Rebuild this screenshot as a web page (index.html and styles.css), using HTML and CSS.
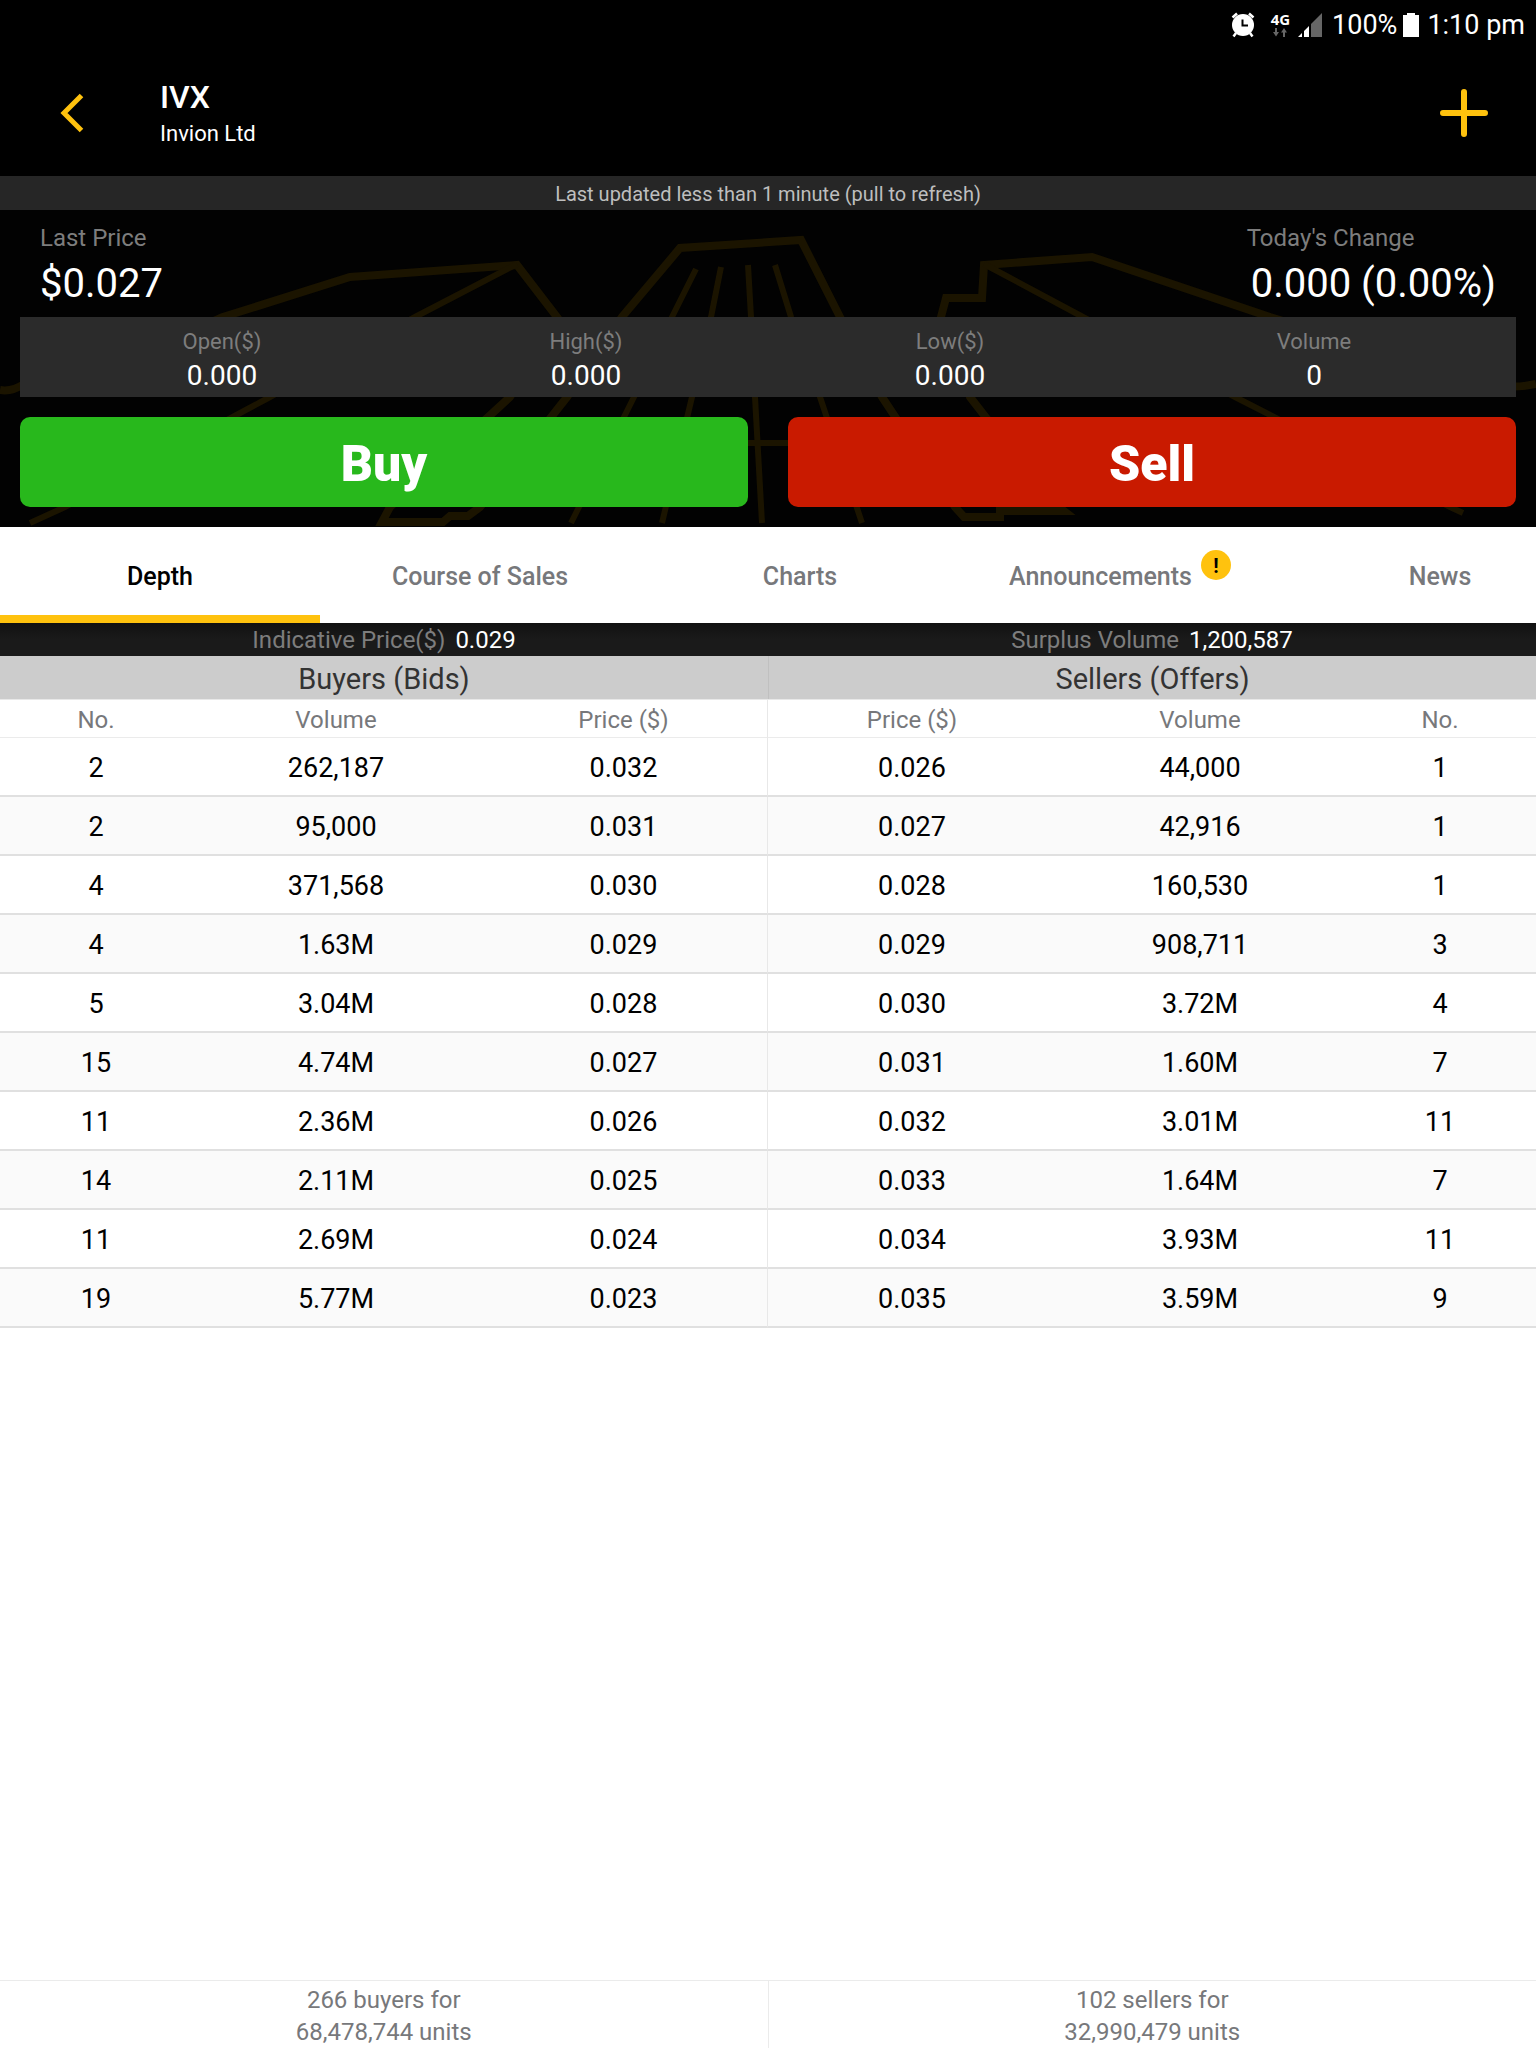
FILE: index.html
```html
<!DOCTYPE html>
<html lang="en">
<head>
    <meta charset="UTF-8">
    <meta name="viewport" content="width=device-width, initial-scale=1.0">
    <title>IVX - Invion Ltd</title>
    <link rel="stylesheet" href="styles.css">
</head>
<body>
    <!-- Device status bar -->
    <div class="status-bar">
        <svg class="icon-alarm" width="24" height="26" viewBox="0 0 24 26">
            <circle cx="12" cy="13" r="11" fill="#fff"/>
            <path d="M1.500 5.500 L6 1.500 M22.500 5.500 L18 1.500" stroke="#fff" stroke-width="2.500"/>
            <path d="M5 21 L2.500 24.500 M19 21 L21.500 24.500" stroke="#fff" stroke-width="2.500"/>
            <path d="M11.500 7.500 V13.500 H17" fill="none" stroke="#000" stroke-width="2"/>
        </svg>
        <div class="network">
            <span>4G</span>
            <svg width="14" height="9" viewBox="0 0 14 9">
                <path d="M2 0 H4 V4 H6 L3 8.500 L0 4 H2 Z M10 9 H12 V4.500 H14 L11 0 L8 4.500 H10 Z" fill="#666"/>
            </svg>
        </div>
        <svg class="icon-signal" width="24" height="24" viewBox="0 0 24 24">
            <path d="M0 24 L4 20 V24 Z M6 24 V18 L11 13 V24 Z" fill="#fff"/>
            <path d="M13 24 V11 L24 0 V24 Z" fill="#666"/>
        </svg>
        <span>100%</span>
        <svg class="icon-battery" width="16" height="24" viewBox="0 0 16 24">
            <path d="M4 0 H12 V2 H16 V24 H0 V2 H4 Z" fill="#fff"/>
        </svg>
        <span>1:10 pm</span>
    </div>

    <header class="header">
        <button class="icon-button back-button" aria-label="Back">
            <svg width="24" height="40" viewBox="0 0 24 40">
                <path d="M21.500 2.500 L4 20 L21.500 37.500" fill="none" stroke="#ffc20e" stroke-width="5"/>
            </svg>
        </button>
        <div class="title">
            <h1>IVX</h1>
            <p>Invion Ltd</p>
        </div>
        <button class="icon-button" aria-label="Add to watchlist">
            <svg width="48" height="48" viewBox="0 0 48 48">
                <path d="M24 3 V45 M3 24 H45" stroke="#ffc20e" stroke-width="6" stroke-linecap="round"/>
            </svg>
        </button>
    </header>

    <div class="updated">Last updated less than 1 minute (pull to refresh)</div>

    <section class="summary">
        <svg class="watermark" viewBox="0 210 1536 317" preserveAspectRatio="none">
            <g fill="none" stroke="#1b1400" stroke-width="8">
                <path d="M0 390 Q12 392 24 384 Q120 365 223 317 L350 277 L517 265 L557 317 L510 397 L390 507 L382 522 H443 L450 516 H468 L480 507 L567 397 L622 317 L680 248 L801 240 L840 317 L882 397 L955 507 L964 517 H1000 V511 H1064 L1050 500 L970 397 L941 317 L946 298 H982 L984 265 L1092 257 L1270 317 L1460 375 Q1500 392 1536 384"/>
            </g>
            <g fill="none" stroke="#1b1400" stroke-width="6">
                <path d="M517 264 L415 317 L270 397 L65 507 L30 523"/>
                <path d="M696 269 L672 317 L634 397 L571 523"/>
                <path d="M721 267 L711 317 L692 397 L662 523"/>
                <path d="M748 265 L751 317 L755 397 L762 523"/>
                <path d="M775 265 L791 317 L820 397 L862 523"/>
                <path d="M745 443 H830"/>
                <path d="M984 264 L1083 317 L1235 397 L1450 507 L1463 513"/>
            </g>
        </svg>

        <div class="prices">
            <div>
                <div class="price-label">Last Price</div>
                <div class="price-value">$0.027</div>
            </div>
            <div>
                <div class="price-label">Today's Change</div>
                <div class="price-value change">0.000 (0.00%)</div>
            </div>
        </div>

        <dl class="stats">
            <div><dt>Open($)</dt><dd>0.000</dd></div>
            <div><dt>High($)</dt><dd>0.000</dd></div>
            <div><dt>Low($)</dt><dd>0.000</dd></div>
            <div><dt>Volume</dt><dd>0</dd></div>
        </dl>

        <div class="actions">
            <button class="button buy">Buy</button>
            <button class="button sell">Sell</button>
        </div>
    </section>

    <nav class="tabs">
        <a class="tab active" href="#depth">Depth</a>
        <a class="tab" href="#sales">Course of Sales</a>
        <a class="tab" href="#charts">Charts</a>
        <a class="tab" href="#announcements">Announcements<span class="badge">!</span></a>
        <a class="tab" href="#news">News</a>
    </nav>

    <main id="depth">
        <div class="indicative">
            <div>Indicative Price($) <b>0.029</b></div>
            <div>Surplus Volume <b>1,200,587</b></div>
        </div>

        <table class="depth-table">
            <colgroup>
                <col class="col-no"><col><col>
                <col><col><col class="col-no">
            </colgroup>
            <thead>
                <tr class="sides"><th colspan="3">Buyers (Bids)</th><th colspan="3">Sellers (Offers)</th></tr>
                <tr class="columns"><th>No.</th><th>Volume</th><th>Price ($)</th><th>Price ($)</th><th>Volume</th><th>No.</th></tr>
            </thead>
            <tbody>
                <tr><td>2</td><td>262,187</td><td>0.032</td><td>0.026</td><td>44,000</td><td>1</td></tr>
                <tr><td>2</td><td>95,000</td><td>0.031</td><td>0.027</td><td>42,916</td><td>1</td></tr>
                <tr><td>4</td><td>371,568</td><td>0.030</td><td>0.028</td><td>160,530</td><td>1</td></tr>
                <tr><td>4</td><td>1.63M</td><td>0.029</td><td>0.029</td><td>908,711</td><td>3</td></tr>
                <tr><td>5</td><td>3.04M</td><td>0.028</td><td>0.030</td><td>3.72M</td><td>4</td></tr>
                <tr><td>15</td><td>4.74M</td><td>0.027</td><td>0.031</td><td>1.60M</td><td>7</td></tr>
                <tr><td>11</td><td>2.36M</td><td>0.026</td><td>0.032</td><td>3.01M</td><td>11</td></tr>
                <tr><td>14</td><td>2.11M</td><td>0.025</td><td>0.033</td><td>1.64M</td><td>7</td></tr>
                <tr><td>11</td><td>2.69M</td><td>0.024</td><td>0.034</td><td>3.93M</td><td>11</td></tr>
                <tr><td>19</td><td>5.77M</td><td>0.023</td><td>0.035</td><td>3.59M</td><td>9</td></tr>
            </tbody>
        </table>
    </main>

    <footer class="totals">
        <div>266 buyers for<br>68,478,744 units</div>
        <div>102 sellers for<br>32,990,479 units</div>
    </footer>
</body>
</html>
```
FILE: styles.css
```css
* {
    box-sizing: border-box;
}
body {
    font-family: Roboto, "Liberation Sans", sans-serif;
    font-size: 24px;
    margin: 0;
    min-height: 100vh;
    display: flex;
    flex-direction: column;
    background-color: #fff;
    color: #000;
}
h1, p, dl, dd {
    margin: 0;
}
button {
    font-family: inherit;
    border: none;
    cursor: pointer;
}

/* Status bar */
.status-bar {
    display: flex;
    justify-content: flex-end;
    align-items: center;
    height: 50px;
    padding-right: 11px;
    background-color: #000;
    color: #fff;
    font-size: 27px;
}
.network {
    display: flex;
    flex-direction: column;
    align-items: center;
    gap: 2px;
    margin: 0 8px 0 16px;
    font-family: "Open Sans", sans-serif;
    font-size: 15px;
    font-weight: bold;
    line-height: 13px;
}
.icon-signal {
    margin-right: 10px;
}
.icon-battery {
    margin: 0 8px 0 6px;
}

/* Header */
.header {
    display: flex;
    align-items: center;
    height: 126px;
    padding: 0 48px 0 60px;
    background-color: #000;
    color: #fff;
}
.icon-button {
    display: flex;
    padding: 0;
    background: none;
}
.title {
    flex: 1;
    margin-left: 76px;
    padding-top: 4px;
}
.title h1 {
    font-size: 32px;
    font-weight: 500;
    line-height: 38px;
}
.title p {
    font-size: 22px;
    line-height: 36px;
}
.updated {
    padding-top: 2px;
    background-color: #262626;
    color: #bebebe;
    font-size: 20px;
    line-height: 32px;
    text-align: center;
}

/* Price summary */
.summary {
    position: relative;
    padding: 12px 20px 20px;
    background-color: #020202;
    color: #fff;
}
.watermark {
    position: absolute;
    top: 0;
    left: 0;
    width: 100%;
    height: 100%;
}
.prices, .stats, .actions {
    position: relative;
    display: flex;
}
.prices {
    justify-content: space-between;
    padding: 0 20px 7px;
}
.price-label {
    color: #7d7d7d;
    line-height: 32px;
}
.price-value {
    padding-top: 4px;
    font-size: 40px;
    line-height: 52px;
}
.change {
    padding-left: 4px;
}
.stats {
    padding: 8px 20px 4px;
    background-color: #2b2b2b;
    text-align: center;
}
.stats div {
    flex: 1;
}
.stats dt {
    color: #7d7d7d;
    font-size: 22px;
    line-height: 34px;
}
.stats dd {
    font-size: 28px;
    line-height: 34px;
}
.actions {
    gap: 40px;
    margin-top: 20px;
}
.button {
    flex: 1;
    height: 90px;
    padding-top: 4px;
    border-radius: 10px;
    color: #fff;
    font-size: 50px;
    font-weight: 900;
}
.buy {
    background-color: #28b81c;
}
.sell {
    background-color: #c91a00;
}

/* Tabs */
.tabs {
    display: flex;
    height: 96px;
    overflow: hidden;
}
.tab {
    display: flex;
    flex: 0 0 320px;
    justify-content: center;
    align-items: center;
    border-bottom: 8px solid transparent;
    padding-top: 10px;
    color: #77787b;
    font-size: 25px;
    font-weight: 500;
    text-decoration: none;
}
.active {
    border-bottom-color: #ffc20e;
    color: #000;
}
.badge {
    width: 30px;
    height: 30px;
    margin: 0 0 22px 9px;
    border-radius: 50%;
    background-color: #ffc20e;
    color: #000;
    font-size: 20px;
    font-weight: bold;
    line-height: 32px;
    text-align: center;
}

/* Market depth */
.indicative {
    display: flex;
    padding-top: 2px;
    background: linear-gradient(#111, #1a1a1a 50%);
    color: #7d7d7d;
    line-height: 31px;
    text-align: center;
}
.indicative div {
    flex: 1;
}
.indicative b {
    margin-left: 4px;
    color: #fff;
    font-weight: normal;
}
.depth-table {
    width: 100%;
    table-layout: fixed;
    border-collapse: separate;
    border-spacing: 0;
    text-align: center;
}
.col-no {
    width: 12.5%;
}
.depth-table th, .depth-table td {
    padding: 2px 0 0;
    font-weight: normal;
}
.sides th {
    height: 43px;
    background-color: #ccc;
    color: #333;
    font-size: 29px;
}
.sides th + th {
    border-left: 1px solid #c0c0c0;
}
.columns th {
    height: 39px;
    border-top: 1px solid #e8e8e8;
    border-bottom: 1px solid #ebebeb;
    color: #77787b;
}
.depth-table td {
    height: 59px;
    border-bottom: 2px solid #e0e0e0;
    font-size: 27px;
}
.depth-table tbody tr:nth-child(even) {
    background-color: #fafafa;
}
.columns th:nth-child(3), .depth-table td:nth-child(3) {
    border-right: 1px solid #e8e8e8;
}

.totals {
    display: flex;
    margin-top: auto;
    border-top: 1px solid #ebebeb;
    color: #77787b;
    line-height: 32px;
    text-align: center;
}
.totals div {
    flex: 1;
    padding-top: 3px;
}
.totals div + div {
    border-left: 1px solid #ebebeb;
}
```
